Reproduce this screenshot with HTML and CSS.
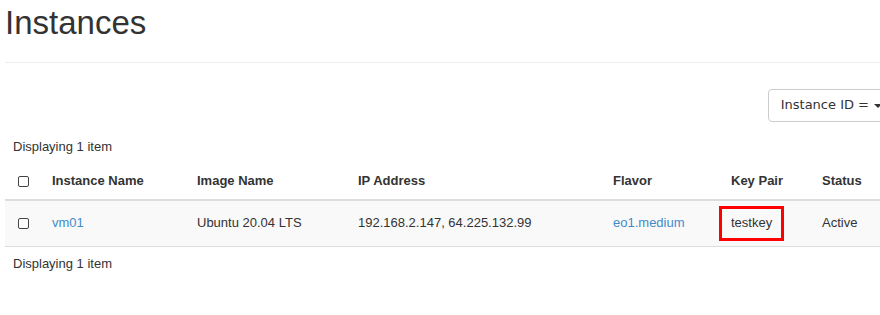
FILE: index.html
```html
<!DOCTYPE html>
<html>
<head>
<meta charset="utf-8">
<link rel="stylesheet" href="styles.css">
</head>
<body>
<div class="page">
  <div class="page-header">
    <h1 class="title">Instances</h1>
  </div>
  <div class="toolbar">
    <div class="filter-group">
      <button class="dropdown-btn" type="button">Instance ID = <span class="caret"></span></button>
      <input class="filter-input" type="text">
    </div>
  </div>
  <table class="data-table">
    <colgroup>
      <col class="c-check">
      <col class="c-name">
      <col class="c-image">
      <col class="c-ip">
      <col class="c-flavor">
      <col class="c-key">
      <col class="c-status">
    </colgroup>
    <caption class="table-caption">Displaying 1 item</caption>
    <thead>
      <tr>
        <th class="cell-check"><span class="checkbox"></span></th>
        <th>Instance Name</th>
        <th>Image Name</th>
        <th>IP Address</th>
        <th>Flavor</th>
        <th>Key Pair</th>
        <th>Status</th>
      </tr>
    </thead>
    <tbody>
      <tr class="row-odd">
        <td class="cell-check"><span class="checkbox"></span></td>
        <td><a class="link" href="#">vm01</a></td>
        <td>Ubuntu 20.04 LTS</td>
        <td>192.168.2.147, 64.225.132.99</td>
        <td><a class="link" href="#">eo1.medium</a></td>
        <td><span class="highlight">testkey</span></td>
        <td>Active</td>
      </tr>
    </tbody>
    <tfoot>
      <tr>
        <td class="footer-cell" colspan="7">Displaying 1 item</td>
      </tr>
    </tfoot>
  </table>
</div>
</body>
</html>
```

FILE: styles.css
```css
html, body {
  margin: 0;
  padding: 0;
  overflow: hidden;
  background: #fff;
}

body {
  font-family: "Liberation Sans", Arial, Helvetica, sans-serif;
  font-size: 13px;
  line-height: 1.428571;
  color: #333;
}

.page {
  width: 1200px;
  margin-left: 5px;
}

.page-header {
  padding: 5px 0 21px;
  border-bottom: 1px solid #eee;
}

.title {
  margin: 0;
  font-size: 33px;
  font-weight: 400;
  line-height: 1.1;
  color: #333;
}

.toolbar {
  display: flex;
  justify-content: flex-end;
  margin-top: 26px;
}

.filter-group {
  display: flex;
}

.dropdown-btn {
  display: flex;
  align-items: center;
  gap: 5px;
  font-family: "DejaVu Sans", sans-serif;
  font-size: 13px;
  line-height: 1.428571;
  color: #333;
  background: #fff;
  border: 1px solid #ccc;
  border-radius: 4px 0 0 4px;
  padding: 6px 12px;
  margin: 0;
}

.caret {
  width: 0;
  height: 0;
  border-left: 4px solid transparent;
  border-right: 4px solid transparent;
  border-top: 4px solid #333;
}

.filter-input {
  width: 285px;
  border: 1px solid #ccc;
  border-left: none;
  margin: 0;
  padding: 6px 12px;
}

.data-table {
  width: 1200px;
  table-layout: fixed;
  border-collapse: collapse;
  border-spacing: 0;
  margin-top: 8px;
}

.c-check { width: 39px; }
.c-name { width: 145px; }
.c-image { width: 161px; }
.c-ip { width: 255px; }
.c-flavor { width: 118px; }
.c-key { width: 91px; }

.table-caption {
  caption-side: top;
  text-align: left;
  padding: 8px;
  color: #333;
}

.data-table th,
.data-table td {
  padding: 8px;
  text-align: left;
  vertical-align: middle;
  white-space: nowrap;
}

.data-table thead th {
  font-weight: 700;
  border-bottom: 2px solid #ddd;
}

.data-table tbody td {
  border-bottom: 1px solid #ddd;
}

.row-odd td {
  background: #f9f9f9;
}

.data-table .cell-check {
  text-align: center;
  padding-left: 6px;
  padding-right: 8px;
}

.checkbox {
  display: inline-block;
  width: 9px;
  height: 9px;
  border: 1.5px solid #444;
  border-radius: 2px;
  background: #fff;
  vertical-align: middle;
}

.link {
  color: #428bca;
  text-decoration: none;
}

.highlight {
  display: inline-block;
  border: 3px solid #f00;
  padding: 5px 9px;
  margin: -3px 0 -3px -12px;
}

.data-table .footer-cell {
  padding: 8px;
}
```
